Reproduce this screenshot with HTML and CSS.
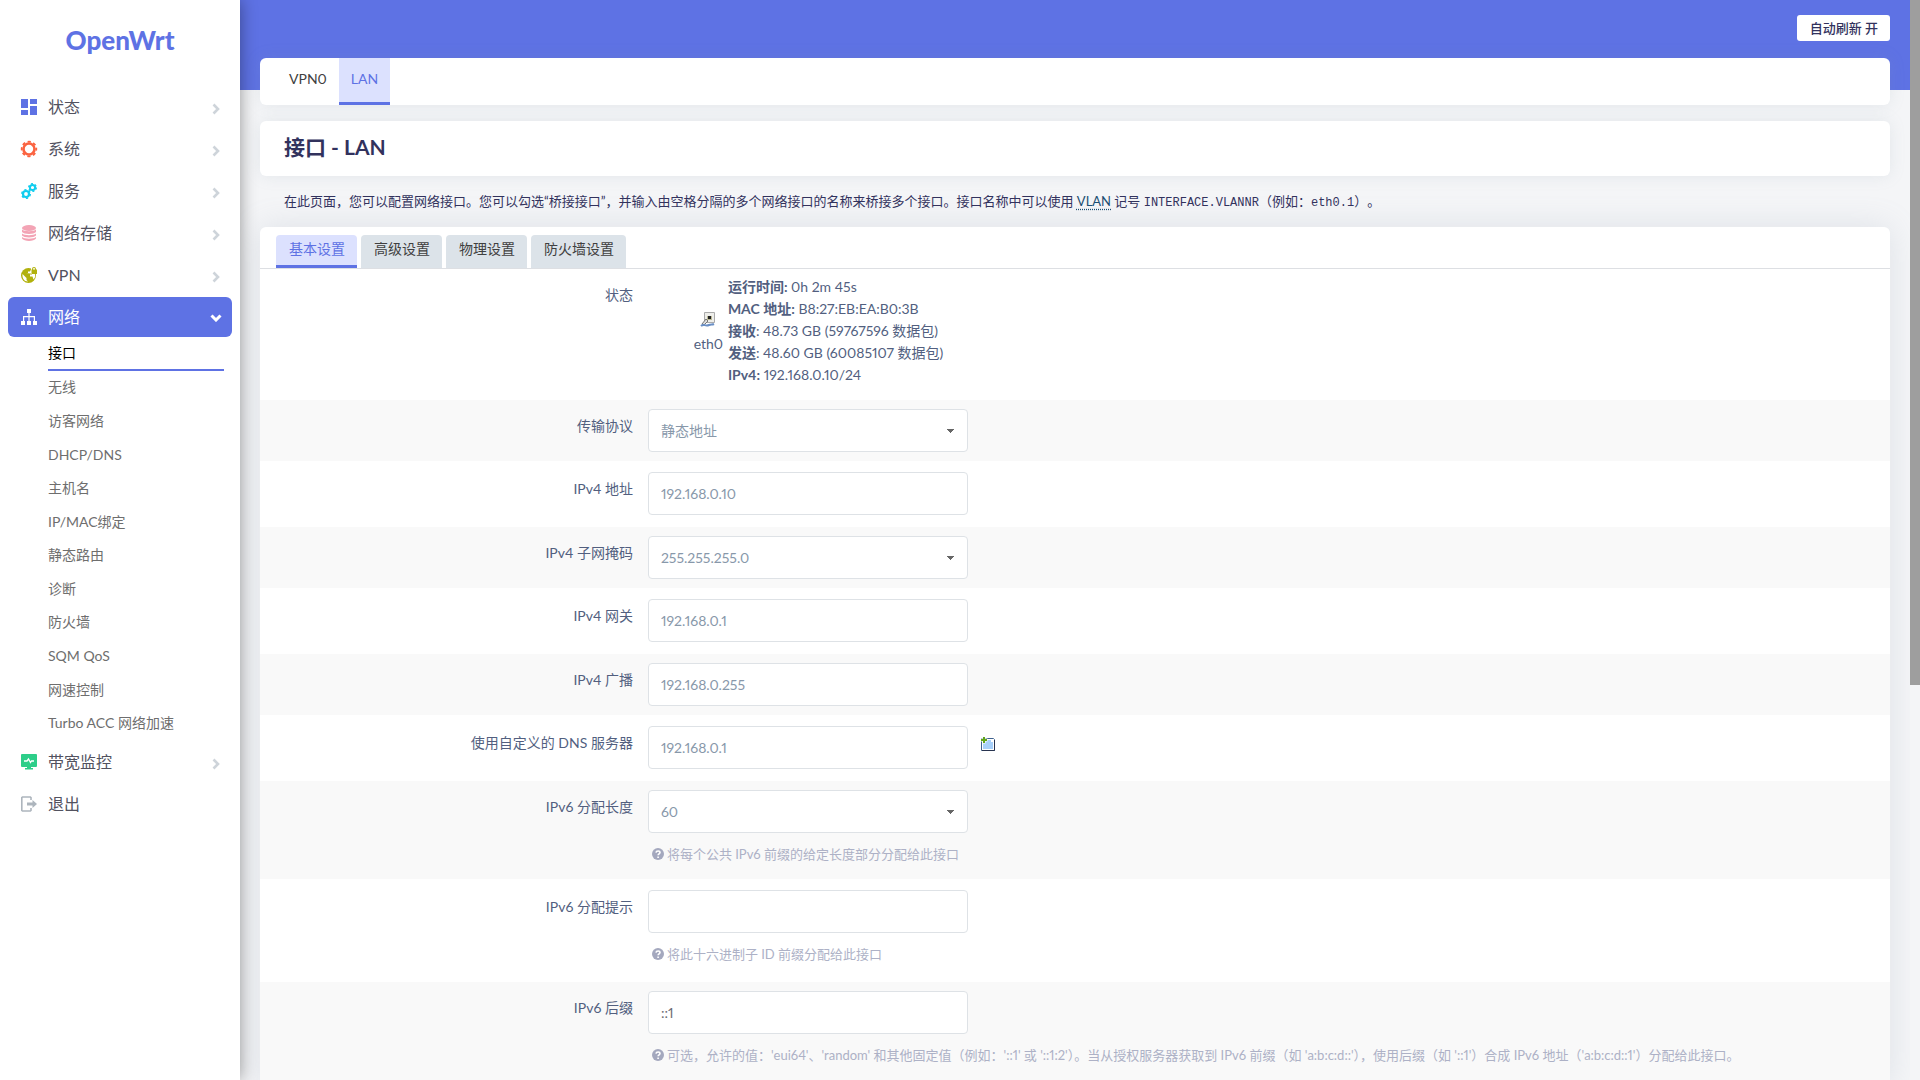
FILE: index.html
```html
<!DOCTYPE html>
<html lang="zh-CN">
<head>
<meta charset="utf-8">
<title>OpenWrt - LAN - LuCI</title>
<link rel="stylesheet" href="styles.css">
</head>
<body>
<aside class="sidebar">
  <a class="brand" href="#">OpenWrt</a>
  <nav class="menu">
    <a class="item" href="#"><svg class="ico" viewBox="0 0 16 16" fill="#5e72e4"><path d="M0 0h7v9H0zM9 0h7v5H9zM0 11h7v5H0zM9 7h7v9H9z"/></svg><span>状态</span><svg class="arrow" viewBox="0 0 8 12"><path d="M1.500 1.500L6 6l-4.500 4.500"/></svg></a>
    <a class="item" href="#"><svg class="ico" viewBox="0 0 16 16" fill="none" stroke="#fb6340"><circle cx="8" cy="8" r="5.500" stroke-width="2.600"/><circle cx="8" cy="8" r="7.300" stroke-width="1.800" stroke-dasharray="3.200 2.533" stroke-dashoffset="1.600"/></svg><span>系统</span><svg class="arrow" viewBox="0 0 8 12"><path d="M1.500 1.500L6 6l-4.500 4.500"/></svg></a>
    <a class="item" href="#"><svg class="ico" viewBox="0 0 16 16" fill="none" stroke="#11cdef"><circle cx="5" cy="11" r="3" stroke-width="2.200"/><circle cx="5" cy="11" r="4.300" stroke-width="1.400" stroke-dasharray="2.200 2.300"/><circle cx="11.500" cy="4.500" r="2.600" stroke-width="2"/><circle cx="11.500" cy="4.500" r="3.800" stroke-width="1.400" stroke-dasharray="2 1.980"/></svg><span>服务</span><svg class="arrow" viewBox="0 0 8 12"><path d="M1.500 1.500L6 6l-4.500 4.500"/></svg></a>
    <a class="item" href="#"><svg class="ico" viewBox="0 0 16 16" fill="#f3a4b5"><ellipse cx="8" cy="3" rx="7" ry="3"/><path d="M1 4.500c2 2.300 12 2.300 14 0v2.500c-2 2.500-12 2.500-14 0zM1 8.500c2 2.300 12 2.300 14 0v2c-2 2.500-12 2.500-14 0zM1 12c2 2.300 12 2.300 14 0v1.500c-2 3.300-12 3.300-14 0z"/></svg><span>网络存储</span><svg class="arrow" viewBox="0 0 8 12"><path d="M1.500 1.500L6 6l-4.500 4.500"/></svg></a>
    <a class="item" href="#"><svg class="ico" viewBox="0 0 16 16"><circle cx="7.500" cy="8.500" r="7.500" fill="#b1b10c"/><path d="M1.500 7l4 4v2l1.500 1.500C3 14.500 1 11 1.500 7zM5 6h2V4.500h2L10 2.500h1v5H9v2h2.500l1 3c2-2 2-4 1.300-5.500" fill="#fff"/><path d="M10 0h6v7h-6z" fill="#fff"/><path d="M11 2.500V2a2 2 0 0 1 4 0v.5h1V7h-5.500V2.500zm1 0h2V2a1 1 0 0 0-2 0z" fill="#b1b10c"/></svg><span>VPN</span><svg class="arrow" viewBox="0 0 8 12"><path d="M1.500 1.500L6 6l-4.500 4.500"/></svg></a>
    <a class="item active" href="#"><svg class="ico" viewBox="0 0 16 16" fill="#fff"><path d="M6 0h4v4H6zM0 12h4v4H0zM6 12h4v4H6zM12 12h4v4h-4zM7.400 4h1.200v3H14v5h-1.200V8.200H8.600V12H7.400V8.200H3.200V12H2V7h5.400z"/></svg><span>网络</span><svg class="arrow down" viewBox="0 0 12 8"><path d="M1.500 1.500L6 6l4.500-4.500"/></svg></a>
    <div class="submenu">
      <a class="sub current" href="#">接口</a>
      <a class="sub" href="#">无线</a>
      <a class="sub" href="#">访客网络</a>
      <a class="sub" href="#">DHCP/DNS</a>
      <a class="sub" href="#">主机名</a>
      <a class="sub" href="#">IP/MAC绑定</a>
      <a class="sub" href="#">静态路由</a>
      <a class="sub" href="#">诊断</a>
      <a class="sub" href="#">防火墙</a>
      <a class="sub" href="#">SQM QoS</a>
      <a class="sub" href="#">网速控制</a>
      <a class="sub" href="#">Turbo ACC 网络加速</a>
    </div>
    <a class="item" href="#"><svg class="ico" viewBox="0 0 16 16"><path d="M1 0h14a1 1 0 0 1 1 1v11a1 1 0 0 1-1 1H1a1 1 0 0 1-1-1V1a1 1 0 0 1 1-1zM6 13h4v1h2v1.500H4V14h2z" fill="#2dce89"/><path d="M3 7h3l1.500-2L9.500 8.500l1-1.500H13" fill="none" stroke="#fff" stroke-width="1.300"/></svg><span>带宽监控</span><svg class="arrow" viewBox="0 0 8 12"><path d="M1.500 1.500L6 6l-4.500 4.500"/></svg></a>
    <a class="item" href="#"><svg class="ico" viewBox="0 0 16 16"><path d="M10 4V1.700L9.300 1H1.500l-.7.700v12.600l.7.700h7.800l.7-.7V12" fill="none" stroke="#adb5bd" stroke-width="1.600"/><path d="M6 6.500h5.500V4L16 8l-4.500 4V9.500H6z" fill="#adb5bd"/></svg><span>退出</span></a>
  </nav>
</aside>
<main class="main">
  <header class="topbar"><button class="refresh" type="button">自动刷新 开</button></header>
  <nav class="card iftabs"><a class="iftab" href="#">VPN0</a><a class="iftab on" href="#">LAN</a></nav>
  <h2 class="card title">接口 - LAN</h2>
  <p class="descr">在此页面，您可以配置网络接口。您可以勾选“桥接接口”，并输入由空格分隔的多个网络接口的名称来桥接多个接口。接口名称中可以使用 <abbr title="Virtual Local Area Network">VLAN</abbr> 记号 <samp>INTERFACE.VLANNR</samp>（例如：<samp>eth0.1</samp>）。</p>
  <form class="card panel">
    <div class="tabs"><a class="tab on" href="#">基本设置</a><a class="tab" href="#">高级设置</a><a class="tab" href="#">物理设置</a><a class="tab" href="#">防火墙设置</a></div>
    <div class="row status">
      <span class="label">状态</span>
      <div class="device">
        <svg class="port" viewBox="0 0 16 16"><path d="M4.500.5h10v10h-10z" fill="#eeeeea" stroke="#aaa"/><path d="M7 4h5v4H7z" fill="#bbb995"/><path d="M8 4h3v3H8z" fill="#222"/><path d="M2 12l4-5 2 2-4 4z" fill="#ddd" stroke="#777"/><path d="M1 14c3-3 4 1 8-1 2-1 3 0 5-1" fill="none" stroke="#6a8fc5" stroke-width="2"/></svg>
        <span>eth0</span>
      </div>
      <div class="stats"><div><b>运行时间:</b> 0h 2m 45s</div><div><b>MAC 地址:</b> B8:27:EB:EA:B0:3B</div><div><b>接收</b>: 48.73 GB (59767596 数据包)</div><div><b>发送</b>: 48.60 GB (60085107 数据包)</div><div><b>IPv4:</b> 192.168.0.10/24</div></div>
    </div>
    <div class="row alt"><label class="label" for="proto">传输协议</label><div class="field"><select class="control" id="proto"><option>静态地址</option></select></div></div>
    <div class="row"><label class="label" for="ip">IPv4 地址</label><div class="field"><input class="control" id="ip" value="192.168.0.10"></div></div>
    <div class="row alt"><label class="label" for="mask">IPv4 子网掩码</label><div class="field"><select class="control" id="mask"><option>255.255.255.0</option></select></div></div>
    <div class="row"><label class="label" for="gw">IPv4 网关</label><div class="field"><input class="control" id="gw" value="192.168.0.1"></div></div>
    <div class="row alt"><label class="label" for="bc">IPv4 广播</label><div class="field"><input class="control" id="bc" value="192.168.0.255"></div></div>
    <div class="row"><label class="label" for="dns">使用自定义的 DNS 服务器</label><div class="field"><input class="control" id="dns" value="192.168.0.1"><button class="add" type="button" aria-label="添加"><svg viewBox="0 0 16 16"><path d="M1.500 2.500h12l1 1v11h-13z" fill="#fff" stroke="#3f628f"/><path d="M3 4h8v2h2v7H3z" fill="#a8d1fb"/><path d="M14.500 4v10.500H2" fill="none" stroke="#28334f"/><path d="M2.500.5h3v2h2v3h-2v2h-3v-2h-2v-3h2z" fill="#fff"/><path d="M3 1h2v2h2v2H5v2H3V5H1V3h2z" fill="#62a51c"/></svg></button></div></div>
    <div class="row alt"><label class="label" for="len">IPv6 分配长度</label><div class="field"><select class="control" id="len"><option>60</option></select><p class="help"><svg viewBox="0 0 12 12"><circle cx="6" cy="6" r="6"/><path d="M4 4.600c.2-2.200 4-2.200 4 0C8 6 6.100 5.900 6.100 7.300M6.100 8.500V10"/></svg>将每个公共 IPv6 前缀的给定长度部分分配给此接口</p></div></div>
    <div class="row"><label class="label" for="hint">IPv6 分配提示</label><div class="field"><input class="control" id="hint" value=""><p class="help"><svg viewBox="0 0 12 12"><circle cx="6" cy="6" r="6"/><path d="M4 4.600c.2-2.200 4-2.200 4 0C8 6 6.100 5.900 6.100 7.300M6.100 8.500V10"/></svg>将此十六进制子 ID 前缀分配给此接口</p></div></div>
    <div class="row alt"><label class="label" for="suffix">IPv6 后缀</label><div class="field"><input class="control dark" id="suffix" value="::1"><p class="help"><svg viewBox="0 0 12 12"><circle cx="6" cy="6" r="6"/><path d="M4 4.600c.2-2.200 4-2.200 4 0C8 6 6.100 5.900 6.100 7.300M6.100 8.500V10"/></svg>可选，允许的值：'eui64'、'random' 和其他固定值（例如：'::1' 或 '::1:2'）。当从授权服务器获取到 IPv6 前缀（如 'a:b:c:d::'），使用后缀（如 '::1'）合成 IPv6 地址（'a:b:c:d::1'）分配给此接口。</p></div></div>
  </form>
</main>
<div class="scroll"><div class="thumb"></div></div>
</body>
</html>
```
FILE: styles.css
```css
* { box-sizing: border-box; }
body {
  margin: 0;
  height: 100vh;
  display: flex;
  overflow: hidden;
  background: #f4f5f7;
  color: #525f7f;
  font: 14px/22px Lato, "Noto Sans CJK SC", sans-serif;
  font-variant-numeric: proportional-nums;
}
a { color: inherit; text-decoration: none; }

.sidebar {
  flex: none;
  width: 240px;
  background: #fff;
  box-shadow: 0 0 16px rgba(0, 0, 0, .4);
  z-index: 2;
}
.brand {
  display: block;
  height: 87px;
  padding-top: 22px;
  text-align: center;
  font-size: 26px;
  line-height: 36px;
  font-weight: 900;
  color: #5e72e4;
}
.menu { display: flex; flex-direction: column; gap: 2px; padding: 0 8px; }
.item {
  display: flex;
  align-items: center;
  gap: 11px;
  height: 40px;
  padding: 0 12px 0 13px;
  border-radius: 6px;
  font-size: 16px;
}
.item span { flex: 1; color: #52525f; }
.item.active { background: #5e72e4; }
.item.active span { color: #fff; }
.ico { width: 16px; height: 16px; overflow: visible; }
.arrow { width: 8px; height: 12px; fill: none; stroke: #ced4da; stroke-width: 2.6; margin-top: 4px; }
.arrow.down { width: 12px; height: 8px; stroke: #fff; stroke-width: 3; margin: 2px -2px 0 0; }
.submenu { display: grid; grid-auto-rows: 1fr; min-height: 403px; margin-top: -2px; padding: 0 8px 0 40px; }
.sub { display: flex; align-items: center; color: #6e6e6e; }
.sub.current { color: #000; border-bottom: 2px solid #5e72e4; }

.main {
  flex: 1;
  min-width: 0;
  padding: 0 20px;
  background: linear-gradient(#5e72e4, #5e72e4) 0 0 / 100% 90px no-repeat;
}
.topbar { display: flex; justify-content: flex-end; height: 58px; padding-top: 15px; }
.refresh {
  height: 26px;
  padding: 0 12px 0 13px;
  border: 0;
  border-radius: 3px;
  background: #fff;
  color: #32325d;
  font: 500 13px/24px Lato, "Noto Sans CJK SC", sans-serif;
}
.card {
  background: #fff;
  border-radius: 6px;
  box-shadow: 0 0 16px rgba(136, 152, 170, .15);
}
.iftabs { display: flex; height: 47px; padding-left: 17px; }
.iftab { padding: 10px 12px; color: #404040; }
.iftab.on { background: #dce1fe; color: #5e72e4; border-bottom: 3px solid #5e72e4; }
.title {
  margin: 16px 0 0;
  padding: 12px 24px 15px;
  font-size: 21px;
  line-height: 28px;
  font-weight: 700;
  color: #32325d;
}
.descr { margin: 0; padding: 14px 24px 15px; font-size: 13px; color: #32325d; text-spacing-trim: space-all; }
.descr abbr { color: #1b4f72; text-decoration: underline dotted; text-underline-offset: 3px; }
.descr samp { font: 12px "Liberation Mono", monospace; }
.panel { box-shadow: 0 0 32px rgba(136, 152, 170, .2); overflow: hidden; min-height: 860px; }
.tabs { display: flex; gap: 4px; padding: 8px 16px 0; border-bottom: 1px solid #dddfe3; }
.tab { padding: 3px 12px 8px 13px; border-radius: 4px 4px 0 0; background: #dce3e9; color: #404040; }
.tab.on { background: #dce1fe; color: #5e72e4; border-bottom: 3px solid #5e72e4; padding-bottom: 5px; }

.row { display: flex; gap: 15px; padding: 11px 0 12px; }
.row.alt { background: #f9f9f9; padding: 9px 0; }
.label { flex: 0 0 calc(23% - 2px); padding-top: 6px; text-align: right; }
.row.status { padding: 7px 0 10px; gap: 0; min-height: 131px; }
.status .label { padding-top: 8px; }
.device {
  display: flex;
  flex-direction: column;
  align-items: center;
  justify-content: center;
  gap: 5px;
  width: 95px;
  padding-left: 56px;
}
.port { width: 16px; height: 16px; }
.control {
  width: 320px;
  height: 43px;
  display: inline-block;
  vertical-align: top;
  padding: 0 12px;
  border: 1px solid #dee2e6;
  border-radius: 4px;
  background: #fff;
  color: #8898aa;
  font: inherit;
  font-variant-numeric: inherit;
}
.control.dark { color: #6c6c74; }
select.control {
  appearance: none;
  background:
    linear-gradient(45deg, transparent 50%, #666 50%) right 16px center / 4px 4px no-repeat,
    linear-gradient(135deg, #666 50%, transparent 50%) right 12px center / 4px 4px no-repeat,
    #fff;
}
.field { flex: 1; min-width: 0; }
.add { border: 0; background: none; padding: 0; margin: 10px 0 0 12px; width: 16px; height: 16px; }
.add svg { display: block; width: 16px; height: 16px; }
.help {
  display: flex;
  align-items: center;
  gap: 3px;
  margin: 10px 0 5px;
  padding-left: 4px;
  font-size: 13px;
  color: #adb1c6;
  white-space: nowrap;
}
.help svg { width: 12px; height: 12px; fill: #a4a8be; }
.help path { fill: none; stroke: #fff; stroke-width: 1.6; }

.scroll { flex: none; width: 10px; background: #f4f5f7; }
.thumb { height: 63.400vh; background: #9e9e9e; }
```
